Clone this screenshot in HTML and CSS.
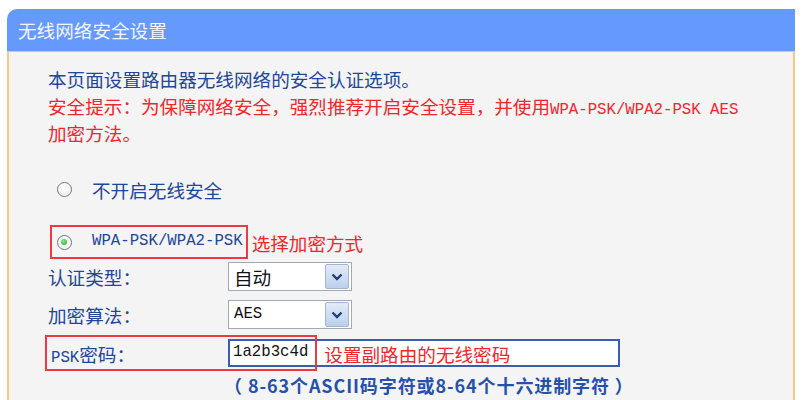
FILE: index.html
```html
<!DOCTYPE html>
<html lang="zh-CN">
<head>
<meta charset="utf-8">
<title>无线网络安全设置</title>
<link rel="stylesheet" href="styles.css">
</head>
<body>
<div class="panel">
  <div class="panel-head">无线网络安全设置</div>
  <div class="panel-body">
    <p class="intro">本页面设置路由器无线网络的安全认证选项。<br><span class="warn">安全提示：为保障网络安全，强烈推荐开启安全设置，并使用<span class="mono">WPA-PSK/WPA2-PSK AES</span><br>加密方法。</span></p>

    <div class="option">
      <span class="radio"></span>
      <span class="option-label">不开启无线安全</span>
    </div>

    <div class="option option-wpa">
      <span class="callout">
        <span class="radio checked"></span>
        <span class="option-label mono">WPA-PSK/WPA2-PSK</span>
      </span>
      <span class="note">选择加密方式</span>
    </div>

    <div class="fields">
      <div class="field">
        <span class="field-label">认证类型：</span>
        <div class="select">
          <span class="select-value">自动</span>
          <span class="select-btn"><svg viewBox="0 0 12 8" width="12" height="8"><polyline points="1.5,1.5 6,6 10.5,1.5" fill="none" stroke="#1d3f7a" stroke-width="2.4"/></svg></span>
        </div>
      </div>
      <div class="field">
        <span class="field-label">加密算法：</span>
        <div class="select">
          <span class="select-value mono">AES</span>
          <span class="select-btn"><svg viewBox="0 0 12 8" width="12" height="8"><polyline points="1.5,1.5 6,6 10.5,1.5" fill="none" stroke="#1d3f7a" stroke-width="2.4"/></svg></span>
        </div>
      </div>
      <div class="field field-psk">
        <span class="field-label"><span class="mono">PSK</span>密码：</span>
        <div class="textbox">
          <span class="textbox-value mono">1a2b3c4d</span>
          <span class="note">设置副路由的无线密码</span>
        </div>
      </div>
      <div class="hint">（ 8-63个ASCII码字符或8-64个十六进制字符 ）</div>
    </div>
  </div>
</div>
</body>
</html>
```

FILE: styles.css
```css
html, body {
  margin: 0;
  padding: 0;
  background: #ffffff;
}

body {
  width: 806px;
  height: 400px;
  overflow: hidden;
  font-family: "Noto Sans CJK SC", "Noto Sans", sans-serif;
  font-size: 18.6px;
  color: #21469a;
}

.panel {
  margin: 9px 0 0 7px;
  width: 788px;
}

.panel-head {
  height: 42px;
  line-height: 42px;
  padding-left: 11px;
  background: #6699fc;
  border-bottom: 1px solid #b3cbf6;
  border-top-left-radius: 10px;
  color: #f2f6ff;
  font-size: 18.6px;
}

.panel-body {
  box-sizing: border-box;
  height: 348px;
  background: #f4f4f4;
  border-left: 2px solid #f7c78a;
  border-right: 2px solid #f7c78a;
  padding: 13px 0 0 39px;
}

.intro {
  margin: 0;
  line-height: 27px;
}

.warn {
  color: #f0262c;
}

.mono {
  font-family: "Liberation Mono", "DejaVu Sans Mono", monospace;
  font-size: 15.7px;
  line-height: 1;
}

.option {
  display: flex;
  align-items: center;
  height: 28px;
  margin-top: 29px;
  padding-left: 9px;
}

.option-label {
  margin-left: 20px;
}

.option-wpa {
  margin-top: 22px;
  padding-left: 2px;
  height: 34px;
}

.callout {
  display: flex;
  align-items: center;
  height: 30px;
  padding: 0 3px 0 5px;
  border: 2px solid #ec3b40;
}

.note {
  color: #f0262c;
  margin-left: 4px;
}

.radio {
  box-sizing: border-box;
  width: 15px;
  height: 15px;
  border-radius: 50%;
  border: 1.5px solid #6a7683;
  background: radial-gradient(circle at 50% 40%, #ffffff 0%, #f1f1f1 55%, #d0d4d9 100%);
  box-shadow: inset 0 0 0 1px #ffffff;
  position: relative;
  flex: none;
}

.radio.checked::after {
  content: "";
  position: absolute;
  left: 3px;
  top: 3px;
  width: 6px;
  height: 6px;
  border-radius: 50%;
  background: radial-gradient(circle at 40% 35%, #8be88b 0%, #23a023 100%);
}

.fields {
  margin-top: 3px;
}

.field {
  display: flex;
  align-items: center;
  height: 29px;
  margin-top: 9px;
}

.field:first-child {
  margin-top: 0;
}

.field-label {
  width: 180px;
  flex: none;
}

.select {
  width: 122px;
  height: 27px;
  border: 1px solid #a3a9b1;
  background: #ffffff;
  display: flex;
  align-items: center;
  justify-content: space-between;
}

.select-value {
  padding-left: 5px;
  color: #111111;
}

.select-btn {
  width: 22px;
  height: 23px;
  margin-right: 2px;
  border: 1px solid #a2b6d4;
  border-radius: 2px;
  background: linear-gradient(#e2ebf8, #bcd0eb);
  display: flex;
  align-items: center;
  justify-content: center;
}

.field-psk {
  position: relative;
  margin-top: 10px;
  height: 28px;
}

.field-psk .field-label {
  padding-left: 3px;
  width: 177px;
}

/* red annotation frame around the PSK label and value */
.field-psk::before {
  content: "";
  position: absolute;
  left: -3px;
  top: -4px;
  width: 268px;
  height: 32px;
  border: 2px solid #ec3b40;
  pointer-events: none;
  z-index: 1;
}

.textbox {
  width: 388px;
  height: 24px;
  border: 2px solid #3b5db0;
  background: #ffffff;
  display: flex;
  align-items: center;
}

.textbox-value {
  padding-left: 3px;
  color: #111111;
}

.textbox .note {
  margin-left: 16px;
}

.hint {
  margin: 6px 0 0 176px;
  font-weight: bold;
  color: #2550ab;
  font-size: 18px;
  line-height: 24px;
  letter-spacing: 0.9px;
  white-space: nowrap;
}
```
